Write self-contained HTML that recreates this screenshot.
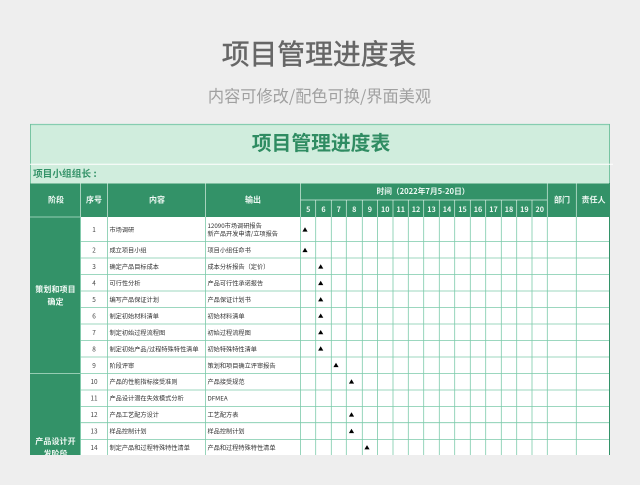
<!DOCTYPE html>
<html lang="zh"><head><meta charset="utf-8"><style>
html,body{margin:0;padding:0;background:#eeeeee;width:640px;height:485px;overflow:hidden}
svg{display:block;filter:blur(.28px)}
text{font-family:"Liberation Sans","Noto Sans CJK SC",sans-serif}
.n{font-family:"Noto Sans CJK SC",sans-serif}
.b{font-size:6.2px;fill:#333;font-family:"Noto Sans CJK SC",sans-serif}
.s{font-size:6.4px;fill:#444;text-anchor:middle;font-family:"Noto Sans CJK SC",sans-serif}
.h{font-size:8px;font-weight:700;fill:#eef8f3;text-anchor:middle;font-family:"Noto Sans CJK SC",sans-serif}
.d{font-size:7.2px;font-weight:700;fill:#eef8f3;text-anchor:middle;font-family:"Noto Sans CJK SC",sans-serif}
.l{stroke:#7ccaaa;stroke-width:.8;fill:none}
.w{stroke:#d6eee2;stroke-width:.7;fill:none}
</style></head><body>
<svg width="640" height="485" viewBox="0 0 640 485" xmlns="http://www.w3.org/2000/svg">
<rect width="640" height="485" fill="#eeeeee"/>
<text x="319" y="64" text-anchor="middle" class="n" font-size="27.8" fill="#666" stroke="#666" stroke-width=".45">项目管理进度表</text>
<text x="319.500" y="102" text-anchor="middle" class="n" font-size="16.200" fill="#a0a0a0">内容可修改/配色可换/界面美观</text>

<rect x="30" y="124" width="580" height="60" fill="#d0eddd"/>
<path d="M30 124.500H610" stroke="#86cdb0" stroke-width="1.200"/>
<path d="M30.500 124V184" stroke="#6fbf9c" stroke-width=".9"/>
<path d="M609.500 124V184" stroke="#6fbf9c" stroke-width=".9"/>
<path d="M30 164.200H613" stroke="#fff" stroke-width="1"/>
<text x="321" y="150" text-anchor="middle" class="n" font-size="19.800" font-weight="700" fill="#2f8c62">项目管理进度表</text>
<text x="33" y="177" class="n" font-size="9.700" font-weight="700" fill="#339268">项目小组组长</text>
<text x="93.500" y="177" class="n" font-size="9.700" font-weight="700" fill="#339268">:</text>

<rect x="30" y="183.500" width="580" height="33.500" fill="#339268"/>
<rect x="30" y="217" width="50.500" height="238" fill="#339268"/>
<rect x="80.500" y="217" width="529" height="238" fill="#fff"/>
<path d="M30 373.500H80.500" stroke="#b9e0cd" stroke-width=".8"/>
<path d="M30 217H80.500" stroke="#b9e0cd" stroke-width=".8"/>

<!-- header dividers -->
<path class="w" d="M80.500 183.500V217M107.500 183.500V217M205.500 183.500V217M300.500 183.500V217M547.300 183.500V217M576.300 183.500V217M300.500 200H547.300"/>
<path class="w" d="M315.700 200V217M331.300 200V217M346.300 200V217M362.300 200V217M377.500 200V217M393 200V217M408.300 200V217M423.700 200V217M439.300 200V217M454.700 200V217M470.300 200V217M485.700 200V217M501.300 200V217M516.700 200V217M532 200V217"/>

<!-- body grid -->
<path class="l" d="M80.500 241.500H609.500M80.500 258H609.500M80.500 274.500H609.500M80.500 291H609.500M80.500 307.500H609.500M80.500 324H609.500M80.500 340.500H609.500M80.500 357H609.500M80.500 373.500H609.500M80.500 390H609.500M80.500 406.500H609.500M80.500 422.700H609.500M80.500 439.500H609.500"/>
<path class="l" d="M80.500 217V455M107.500 217V455M205.500 217V455M300.400 217V455M315.700 217V455M331.300 217V455M346.300 217V455M362.300 217V455M377.500 217V455M393 217V455M408.300 217V455M423.700 217V455M439.300 217V455M454.700 217V455M470.300 217V455M485.700 217V455M501.300 217V455M516.700 217V455M532 217V455M547.300 217V455M576.300 217V455"/>
<path d="M609.500 183V455" stroke="#339268" stroke-width="1"/>

<!-- headers -->
<text class="h" x="56" y="202.500">阶段</text>
<text class="h" x="94" y="202.500">序号</text>
<text class="h" x="157" y="202.500">内容</text>
<text class="h" x="253" y="202.500">输出</text>
<text class="h" x="562" y="202.500">部门</text>
<text class="h" x="593.500" y="202.500">责任人</text>
<text class="h" x="423" y="194" style="font-size:7.700px">时间（2022年7月5-20日）</text>
<text class="d" x="308.200" y="212">5</text><text class="d" x="323.500" y="212">6</text><text class="d" x="338.800" y="212">7</text><text class="d" x="354.300" y="212">8</text><text class="d" x="369.900" y="212">9</text><text class="d" x="385.300" y="212">10</text><text class="d" x="400.700" y="212">11</text><text class="d" x="416" y="212">12</text><text class="d" x="431.500" y="212">13</text><text class="d" x="447" y="212">14</text><text class="d" x="462.500" y="212">15</text><text class="d" x="478" y="212">16</text><text class="d" x="493.500" y="212">17</text><text class="d" x="509" y="212">18</text><text class="d" x="524.400" y="212">19</text><text class="d" x="539.700" y="212">20</text>

<!-- stage -->
<text class="h" x="55.500" y="292" letter-spacing=".1">策划和项目</text>
<text class="h" x="55.500" y="304.500">确定</text>
<text class="h" x="55.500" y="444" letter-spacing=".1">产品设计开</text>
<text class="h" x="55.500" y="456.500">发阶段</text>

<!-- seq -->
<text class="s" x="94" y="232">1</text><text class="s" x="94" y="252.500">2</text><text class="s" x="94" y="269">3</text><text class="s" x="94" y="285.500">4</text><text class="s" x="94" y="302">5</text><text class="s" x="94" y="318.500">6</text><text class="s" x="94" y="335">7</text><text class="s" x="94" y="351.500">8</text><text class="s" x="94" y="368">9</text><text class="s" x="94" y="384">10</text><text class="s" x="94" y="400.500">11</text><text class="s" x="94" y="417">12</text><text class="s" x="94" y="433.500">13</text><text class="s" x="94" y="450">14</text>

<!-- content -->
<text class="b" x="109.500" y="232">市场调研</text>
<text class="b" x="109.500" y="252.500">成立项目小组</text>
<text class="b" x="109.500" y="269">确定产品目标成本</text>
<text class="b" x="109.500" y="285.500">可行性分析</text>
<text class="b" x="109.500" y="302">编写产品保证计划</text>
<text class="b" x="109.500" y="318.500">制定初始材料清单</text>
<text class="b" x="109.500" y="335">制定初始过程流程图</text>
<text class="b" x="109.500" y="351.500">制定初始产品/过程特殊特性清单</text>
<text class="b" x="109.500" y="368">阶段评审</text>
<text class="b" x="109.500" y="384">产品的性能指标接受准则</text>
<text class="b" x="109.500" y="400.500">产品设计潜在失效模式分析</text>
<text class="b" x="109.500" y="417">产品工艺配方设计</text>
<text class="b" x="109.500" y="433.500">样品控制计划</text>
<text class="b" x="109.500" y="450">制定产品和过程特殊特性清单</text>

<!-- output -->
<text class="b" x="207.500" y="228">12090市场调研报告</text>
<text class="b" x="207.500" y="236">新产品开发申请/立项报告</text>
<text class="b" x="207.500" y="252.500">项目小组任命书</text>
<text class="b" x="207.500" y="269">成本分析报告（定价）</text>
<text class="b" x="207.500" y="285.500">产品可行性承诺报告</text>
<text class="b" x="207.500" y="302">产品保证计划书</text>
<text class="b" x="207.500" y="318.500">初始材料清单</text>
<text class="b" x="207.500" y="335">初始过程流程图</text>
<text class="b" x="207.500" y="351.500">初始特殊特性清单</text>
<text class="b" x="207.500" y="368">策划和项目确立评审报告</text>
<text class="b" x="207.500" y="384">产品接受规范</text>
<text class="b" x="207.500" y="400.500">DFMEA</text>
<text class="b" x="207.500" y="417">工艺配方表</text>
<text class="b" x="207.500" y="433.500">样品控制计划</text>
<text class="b" x="207.500" y="450">产品和过程特殊特性清单</text>

<!-- markers -->
<g fill="#000">
<path d="M305 227.300l2.600 4.300h-5.200zM305 247.800l2.600 4.300h-5.200z"/>
<path d="M320.700 264.300l2.600 4.300h-5.200zM320.700 280.800l2.600 4.300h-5.200zM320.700 297.100l2.600 4.300h-5.200zM320.700 313.500l2.600 4.300h-5.200zM320.700 330l2.600 4.300h-5.200zM320.700 346.300l2.600 4.300h-5.200z"/>
<path d="M336 362.800l2.600 4.300h-5.200z"/>
<path d="M351.500 379.300l2.600 4.300h-5.200zM351.500 412.300l2.600 4.300h-5.200zM351.500 428.800l2.600 4.300h-5.200z"/>
<path d="M367 445.100l2.600 4.300h-5.200z"/>
</g>
<rect x="0" y="455" width="640" height="30" fill="#eeeeee"/>
</svg>
</body></html>
